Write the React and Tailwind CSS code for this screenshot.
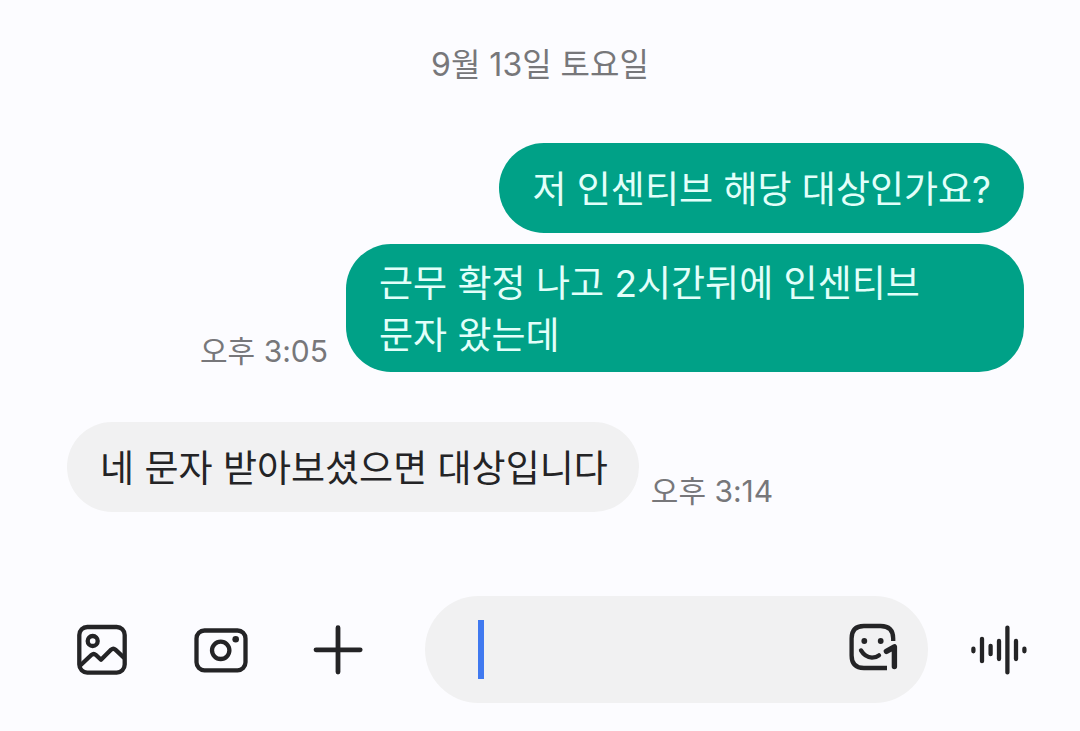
import React from 'react';

function Icon({ children }) {
  return (
    <svg
      viewBox="0 0 60 60"
      className="size-[60px]"
      fill="none"
      stroke="currentColor"
      strokeWidth="4.3"
      strokeLinecap="round"
      strokeLinejoin="round"
      aria-hidden="true"
    >
      {children}
    </svg>
  );
}

function GalleryIcon() {
  return (
    <Icon>
      <rect x="7.3" y="7" width="45.4" height="45.6" rx="8" />
      <circle cx="20.7" cy="21" r="5" />
      <path d="M8.5 45.2 19.6 34.8Q21.7 33 23.7 34.8L29 39.8 39.2 29.6Q41.3 27.8 43.4 29.6L51.6 37.4" />
    </Icon>
  );
}

function CameraIcon() {
  return (
    <Icon>
      <rect x="6.5" y="10.5" width="49" height="39.8" rx="8" />
      <circle cx="30.7" cy="30.3" r="8.7" />
      <circle cx="45.7" cy="19.3" r="3.3" fill="currentColor" stroke="none" />
    </Icon>
  );
}

function PlusIcon() {
  return (
    <Icon>
      <path d="M30 7.7V52M8 29.8H52.2" strokeWidth="4.8" />
    </Icon>
  );
}

function StickerIcon() {
  return (
    <Icon>
      <path d="M49.2 21V18.5Q49.2 6 36.7 6H19.9Q7.6 6 7.6 18.5V35.5Q7.6 48 19.9 48H43" strokeLinecap="butt" />
      <circle cx="20.3" cy="21" r="2.9" fill="currentColor" stroke="none" />
      <circle cx="36.7" cy="21" r="2.9" fill="currentColor" stroke="none" />
      <path d="M17 30.4Q21 37.2 28 37.6Q32.4 37.6 35 35.4" />
      <path d="M42.4 31.4 50.4 26.8V46.6" strokeWidth="5.4" />
    </Icon>
  );
}

function VoiceIcon() {
  return (
    <Icon>
      <path d="M4.4 28.7V31.3M13 18.8V41.2M21.6 25.8V34.2M30 21V39M38.4 7.6V52.4M47 21V39M55.4 28.7V31.3" />
    </Icon>
  );
}

function IconButton({ label, children }) {
  return (
    <button type="button" aria-label={label} className="size-[60px] shrink-0 text-[#242426]">
      {children}
    </button>
  );
}

function Sent({ children, time, className }) {
  return (
    <div className="flex items-end justify-end gap-[18px]">
      {time && <time className="mb-[3px] shrink-0 text-[30px] leading-[36px] text-[#77777a]">{time}</time>}
      <p
        className={`max-w-[678px] rounded-[45px] bg-[#00a187] px-[33px] text-[37px] leading-[52px] break-keep text-[#e2fffa] ${className}`}
      >
        {children}
      </p>
    </div>
  );
}

function Received({ children, time }) {
  return (
    <div className="flex items-end gap-[12px]">
      <p className="max-w-[678px] rounded-[45px] bg-[#f1f1f2] pt-[21px] pr-[31px] pb-[17px] pl-[33px] text-[37px] leading-[52px] break-keep text-[#242426]">
        {children}
      </p>
      <time className="mb-[3px] shrink-0 text-[30px] leading-[36px] text-[#77777a]">{time}</time>
    </div>
  );
}

export default function App() {
  return (
    <div className="flex min-h-screen flex-col bg-[#fcfcff] font-['Inter','Noto_Sans_CJK_KR',sans-serif]">
      <main className="grow pt-[45px] pr-[56px] pl-[67px]">
        <h1 className="pr-[11px] text-center text-[32px] leading-[40px] font-normal text-[#77777a]">9월 13일 토요일</h1>
        <div className="mt-[58px] flex flex-col gap-[11px]">
          <Sent className="pt-[21px] pb-[17px]">저 인센티브 해당 대상인가요?</Sent>
          <Sent className="pt-[14px] pb-[10px]" time="오후 3:05">
            근무 확정 나고 2시간뒤에 인센티브 문자 왔는데
          </Sent>
        </div>
        <div className="mt-[50px]">
          <Received time="오후 3:14">네 문자 받아보셨으면 대상입니다</Received>
        </div>
      </main>

      <form className="flex items-center pr-[51px] pb-[28px] pl-[72px]" onSubmit={(e) => e.preventDefault()}>
        <div className="flex gap-[58px]">
          <IconButton label="갤러리">
            <GalleryIcon />
          </IconButton>
          <IconButton label="카메라">
            <CameraIcon />
          </IconButton>
          <IconButton label="더보기">
            <PlusIcon />
          </IconButton>
        </div>
        <div className="mr-[41px] ml-[57px] flex h-[107px] min-w-0 grow items-center rounded-full bg-[#f1f1f2] pr-[24px] pl-[53px]">
          <span className="h-[59px] w-[6px] shrink-0 bg-[#4079f0]" />
          <input
            type="text"
            aria-label="메시지 입력"
            className="min-w-0 grow bg-transparent text-[37px] leading-[52px] text-[#242426] caret-[#4079f0] outline-none"
          />
          <IconButton label="스티커">
            <StickerIcon />
          </IconButton>
        </div>
        <IconButton label="음성 메시지">
          <VoiceIcon />
        </IconButton>
      </form>
    </div>
  );
}
